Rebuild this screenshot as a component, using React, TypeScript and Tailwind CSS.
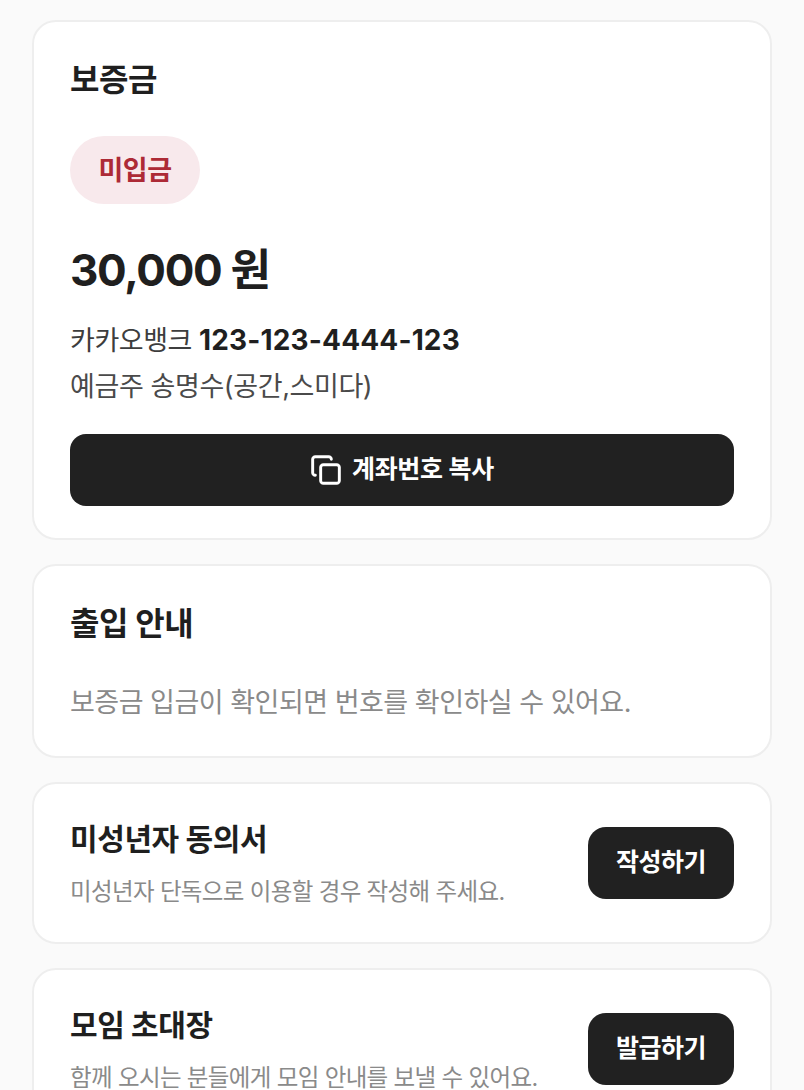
import { Copy } from "lucide-react";

const FONT = "font-['Inter','Noto_Sans_CJK_KR',sans-serif]";

function ActionCard({ title, desc, label }: { title: string; desc: string; label: string }) {
  return (
    <div className="flex items-center justify-between bg-white border-2 border-[#eeeeee] rounded-[24px] px-[36px] h-[162px]">
      <div>
        <h2 className="text-[30px] leading-[44px] font-bold text-[#1f1f1f] tracking-[-0.4px]">{title}</h2>
        <p className="text-[23.5px] leading-[36px] text-[#8a8a8a] mt-[13px] tracking-[-0.64px]">{desc}</p>
      </div>
      <button className="w-[146px] h-[72px] shrink-0 rounded-[18px] bg-[#212121] text-white text-[25px] font-semibold tracking-[-0.5px]">
        {label}
      </button>
    </div>
  );
}

export default function App() {
  return (
    <div className={`${FONT} bg-[#fafafa] h-[1090px] overflow-hidden px-[32px] pt-[20px] flex flex-col gap-[24px]`}>
      <div className="bg-white border-2 border-[#eeeeee] rounded-[24px] px-[36px] h-[520px] shrink-0 pt-[35px]">
        <h2 className="text-[32px] leading-[46px] font-bold text-[#1f1f1f] tracking-[-0.4px]">보증금</h2>
        <span className="mt-[33px] pt-[2px] flex items-center justify-center w-[130px] h-[68px] rounded-full bg-[#f8e9ec] text-[#ad2a36] text-[27px] font-bold tracking-[-0.5px]">
          미입금
        </span>
        <p className="mt-[36px] text-[44px] leading-[60px] font-bold text-[#1f1f1f] tracking-[-1.3px]">30,000 원</p>
        <p className="mt-[20px] text-[27px] leading-[40px] text-[#3d3d3d] tracking-[-0.45px]">
          카카오뱅크 <span className="text-[28px] font-bold text-[#1f1f1f] tracking-[0.15px]">123-123-4444-123</span>
        </p>
        <p className="mt-[6px] text-[27px] leading-[40px] text-[#4a4a4a] tracking-[-0.4px]">예금주 송명수(공간,스미다)</p>
        <button className="mt-[27px] w-full h-[72px] rounded-[16px] bg-[#212121] text-white text-[25px] font-semibold tracking-[-0.35px] flex items-center justify-center gap-[10px]">
          <Copy size={32} strokeWidth={2.2} />
          계좌번호 복사
        </button>
      </div>

      <div className="bg-white border-2 border-[#eeeeee] rounded-[24px] px-[36px] h-[194px] shrink-0 pt-[35px]">
        <h2 className="text-[32px] leading-[46px] font-bold text-[#1f1f1f] tracking-[-0.4px]">출입 안내</h2>
        <p className="mt-[36px] text-[27px] leading-[40px] text-[#8a8a8a] tracking-[-0.5px]">
          보증금 입금이 확인되면 번호를 확인하실 수 있어요.
        </p>
      </div>

      <div className="shrink-0">
        <ActionCard title="미성년자 동의서" desc="미성년자 단독으로 이용할 경우 작성해 주세요." label="작성하기" />
      </div>
      <div className="shrink-0">
        <ActionCard title="모임 초대장" desc="함께 오시는 분들에게 모임 안내를 보낼 수 있어요." label="발급하기" />
      </div>
    </div>
  );
}
